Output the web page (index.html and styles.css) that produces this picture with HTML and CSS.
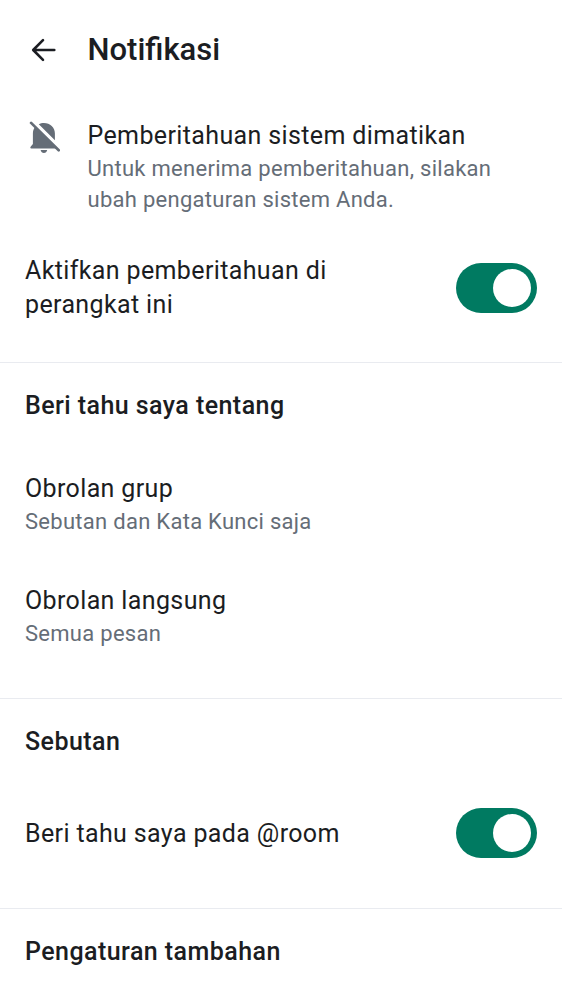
FILE: index.html
```html
<!DOCTYPE html>
<html lang="id">
<head>
<meta charset="utf-8">
<title>Notifikasi</title>
<link rel="stylesheet" href="styles.css">
</head>
<body>
<header class="topbar">
  <svg class="back" viewBox="0 0 32 32"><path d="M26.300 16H5.500M15 6.200 5.200 16l9.800 9.800"/></svg>
  <h1 class="title">Notifikasi</h1>
</header>
<main>
  <section class="notice">
    <svg class="bell" viewBox="0 0 32 34">
      <path d="M7 6C5.600 7.800 4.900 10 4.900 12.500V23L3 25.200Q2.300 25.900 2.300 26.500 2.300 27.400 3.300 27.400H28.500zM10.800 3.200C12.300 2.300 14 2 15.900 2 22.100 2 26.900 6.300 26.900 12.500V19.300zM12.600 29.100H19.200Q18.500 32 15.900 32T12.600 29.100z"/>
      <path class="slash" d="M3.100 1.900 30.700 29.200"/>
    </svg>
    <div>
      <p class="label">Pemberitahuan sistem dimatikan</p>
      <p class="sub">Untuk menerima pemberitahuan, silakan<br>ubah pengaturan sistem Anda.</p>
    </div>
  </section>
  <section class="row device">
    <p class="label">Aktifkan pemberitahuan di<br>perangkat ini</p>
    <span class="switch"></span>
  </section>
  <section class="group about">
    <h2 class="heading">Beri tahu saya tentang</h2>
    <div class="item">
      <p class="label">Obrolan grup</p>
      <p class="sub">Sebutan dan Kata Kunci saja</p>
    </div>
    <div class="item">
      <p class="label">Obrolan langsung</p>
      <p class="sub">Semua pesan</p>
    </div>
  </section>
  <section class="group mention">
    <h2 class="heading">Sebutan</h2>
    <div class="row room">
      <p class="label">Beri tahu saya pada @room</p>
      <span class="switch"></span>
    </div>
  </section>
  <section class="group extra">
    <h2 class="heading">Pengaturan tambahan</h2>
  </section>
</main>
</body>
</html>
```
FILE: styles.css
```css
* { box-sizing: border-box; }
body {
  margin: 0;
  height: 1000px;
  overflow: hidden;
  background: #fff;
  color: #1b1d22;
  font-family: Roboto, "Liberation Sans", sans-serif;
}
h1, h2, p { margin: 0; }
.topbar { display: flex; align-items: center; height: 100px; padding-left: 28px; }
.back {
  width: 32px;
  height: 32px;
  fill: none;
  stroke: #1b1d22;
  stroke-width: 2.6;
  stroke-linecap: round;
  stroke-linejoin: round;
}
.title { margin-left: 27.5px; font-size: 31px; font-weight: 500; line-height: 44px; }
.notice { display: flex; height: 137px; padding: 19px 25px 0 28px; }
.bell { width: 32px; height: 34px; margin: 2px 27.5px 0 0; fill: #656d77; }
.slash { fill: none; stroke: #656d77; stroke-width: 2.7; stroke-linecap: round; }
.label { font-size: 25px; line-height: 34px; letter-spacing: .37px; }
.sub { font-size: 22px; line-height: 31px; letter-spacing: .28px; color: #656d77; }
.row { display: flex; align-items: center; justify-content: space-between; padding: 0 25px; }
.device { height: 101px; }
.switch {
  flex: none;
  width: 81px;
  height: 50px;
  padding: 6px;
  border-radius: 25px;
  background: #007a61;
}
.switch::after {
  content: "";
  display: block;
  width: 38px;
  height: 38px;
  margin-left: auto;
  border-radius: 50%;
  background: #fff;
}
.group { border-top: 1px solid #e9ebf0; }
.about { height: 336px; margin-top: 24px; }
.heading { padding: 25px 25px 0; font-size: 25px; font-weight: 500; line-height: 36px; letter-spacing: .44px; }
.item { height: 112px; padding: 0 25px; }
.heading + .item { margin-top: 48px; }
.mention { height: 210px; }
.room { height: 50px; margin-top: 48px; }
.room .label { padding-top: 2px; }
```
